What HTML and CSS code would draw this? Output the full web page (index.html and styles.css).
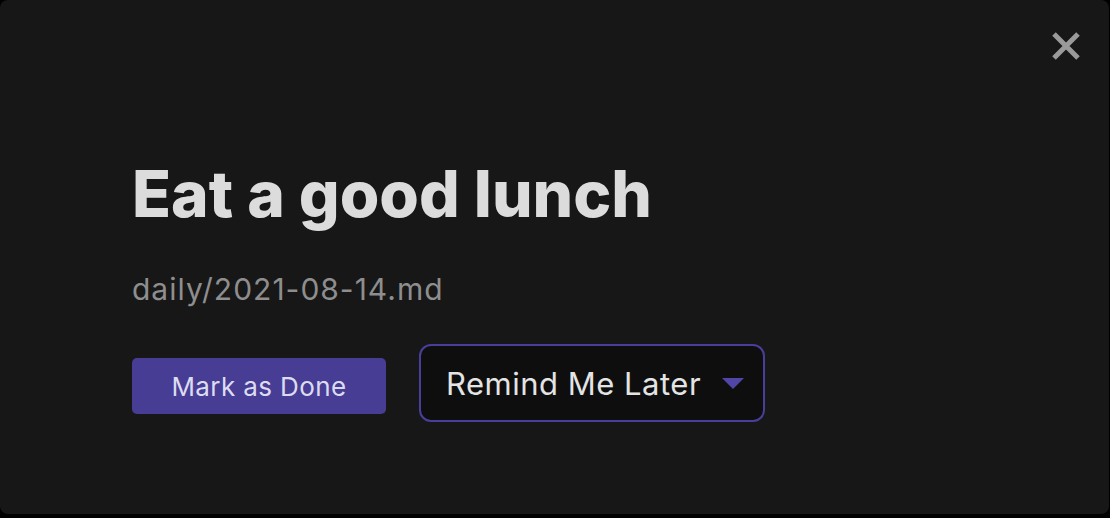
FILE: index.html
```html
<!DOCTYPE html>
<html lang="en">
<head>
<meta charset="utf-8">
<title>Reminder</title>
<link rel="stylesheet" href="styles.css">
</head>
<body>
<div class="modal">
  <button class="close" aria-label="Close">
    <svg width="30" height="28" viewBox="0 0 30 28"><path d="M3 2 L27 26 M27 2 L3 26" stroke="#9a9a9a" stroke-width="5" fill="none"/></svg>
  </button>
  <div class="content">
    <h1 class="title">Eat a good lunch</h1>
    <div class="path">daily/2021-08-14.md</div>
    <div class="actions">
      <button class="done">Mark as Done</button>
      <button class="later">
        <span>Remind Me Later</span>
        <svg class="caret" width="22" height="11" viewBox="0 0 22 11"><path d="M0 0 H22 L11 11 Z" fill="#5146a8"/></svg>
      </button>
    </div>
  </div>
</div>
</body>
</html>
```
FILE: styles.css
```css
html, body {
  margin: 0;
  padding: 0;
  background: #000;
  width: 1110px;
  height: 518px;
  overflow: hidden;
  font-family: Inter, "Noto Sans", sans-serif;
}
.modal {
  position: relative;
  box-sizing: border-box;
  width: 1109px;
  height: 514px;
  background: #171717;
  border-radius: 8px;
}
.close {
  position: absolute;
  top: 32px;
  right: 28px;
  padding: 0;
  border: 0;
  background: none;
  display: flex;
}
.content {
  display: flex;
  flex-direction: column;
  padding: 155px 0 0 132px;
}
.title {
  margin: 0;
  font-size: 64px;
  line-height: 78px;
  font-weight: 800;
  color: #dcdcdd;
  letter-spacing: 0;
}
.path {
  margin-top: 38px;
  font-size: 30px;
  line-height: 36px;
  letter-spacing: 1px;
  color: #8e8e8e;
}
.actions {
  margin-top: 37px;
  display: flex;
  align-items: center;
  gap: 33px;
}
.done {
  width: 254px;
  height: 56px;
  border: 0;
  border-radius: 5px;
  background: #483d95;
  color: #dcdcf0;
  font-family: inherit;
  font-size: 26px;
  letter-spacing: 0.4px;
  margin-top: 6px;
}
.later {
  box-sizing: border-box;
  width: 346px;
  height: 78px;
  display: flex;
  align-items: center;
  justify-content: space-between;
  padding: 0 19px 0 25px;
  border: 2px solid #4a3e9c;
  border-radius: 12px;
  background: #0e0e0f;
  color: #e4e4e4;
  font-family: inherit;
  font-size: 31px;
  letter-spacing: 0.5px;
}
.caret {
  display: block;
}
```
